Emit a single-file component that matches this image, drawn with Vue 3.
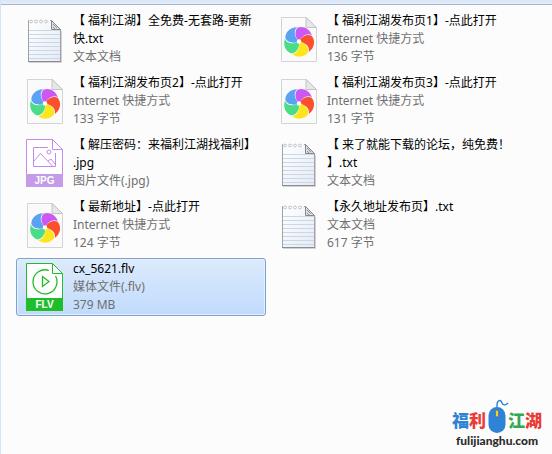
<script setup>
import { ref } from 'vue'

const files = [
  { kind: 'text', title: ['【 福利江湖】全免费-无套路-更新', '快.txt'], details: ['文本文档'] },
  { kind: 'link', title: ['【 福利江湖发布页1】-点此打开'], details: ['Internet 快捷方式', '136 字节'] },
  { kind: 'link', title: ['【 福利江湖发布页2】-点此打开'], details: ['Internet 快捷方式', '133 字节'] },
  { kind: 'link', title: ['【 福利江湖发布页3】-点此打开'], details: ['Internet 快捷方式', '131 字节'] },
  { kind: 'jpg', title: ['【 解压密码：来福利江湖找福利】', '.jpg'], details: ['图片文件(.jpg)'] },
  { kind: 'text', title: ['【 来了就能下载的论坛，纯免费！', '】.txt'], details: ['文本文档'] },
  { kind: 'link', title: ['【 最新地址】-点此打开'], details: ['Internet 快捷方式', '124 字节'] },
  { kind: 'text', title: ['【永久地址发布页】.txt'], details: ['文本文档', '617 字节'] },
  { kind: 'flv', title: ['cx_5621.flv'], details: ['媒体文件(.flv)', '379 MB'] },
]
const selected = ref(8)
const petals = ['#cb58f2', '#fb4f2d', '#fde51d', '#48dd86', '#5ba2f5']
const rules = [15, 19, 23, 27, 31, 35, 39, 43]
const rings = [5, 10, 15, 20]
</script>

<template>
  <main class="window">
    <div class="toolbar-edge"></div>
    <ul class="files">
      <li v-for="(file, i) in files" :key="i">
        <button type="button" class="file" :class="{ selected: selected === i }" :aria-pressed="selected === i" @click="selected = i">
          <svg v-if="file.kind === 'text'" class="icon" viewBox="0 0 37 48" aria-hidden="true">
            <defs>
              <linearGradient :id="'paper' + i" x1="0" y1="0" x2="1" y2="1">
                <stop offset="0" stop-color="#ffffff" />
                <stop offset="1" stop-color="#e6e9f6" />
              </linearGradient>
            </defs>
            <path d="M3 47.5H35.5V16" fill="none" stroke="#d2d2d4" />
            <path d="M2.5 5.5H25.5L34.5 14.5V46.5H2.5Z" :fill="`url(#paper${i})`" stroke="#a0a2a6" />
            <path d="M2 46.5H35" stroke="#8b8d91" />
            <path v-for="y in rules" :key="y" :d="`M3 ${y}.5H34`" stroke="#c6dae5" />
            <path d="M25.5 5.5V14.5H34.5Z" fill="#dcdde0" stroke="#85878b" />
            <path d="M27 9L31 13M27 12L29 14" stroke="#8e9094" />
            <path d="M3 5.5H24" stroke="#f4f4f6" />
            <circle v-for="x in rings" :key="x" :cx="x" cy="6.5" r="1.4" fill="#fff" stroke="#b4b5b8" stroke-width="0.8" />
          </svg>

          <svg v-else-if="file.kind === 'link'" class="icon" viewBox="0 0 37 48" aria-hidden="true">
            <path d="M1.5 2.5H26.5L36.5 12.5V46.5H1.5Z" fill="#fafafa" stroke="#d3d4d6" />
            <path d="M26 2.5V12.5H36.5Z" fill="#e6e7e9" stroke="#c3c4c7" />
            <g transform="translate(19 26.5)">
              <path v-for="(color, n) in petals" :key="color" d="M0 0C-4 -4 -5 -11 -1 -14C4 -16 11 -13 13 -6C9 -9 3 -6 0 0Z" :fill="color" :transform="`rotate(${n * 72})`" />
              <circle r="2.2" fill="#fff" />
            </g>
          </svg>

          <svg v-else-if="file.kind === 'jpg'" class="icon" viewBox="0 0 37 48" aria-hidden="true">
            <path d="M0.5 0.5H26.5L36.5 10.5V47.5H0.5Z" fill="#fff" stroke="#c18bec" />
            <path d="M26.5 0.5V10.5H36.5" fill="none" stroke="#c18bec" />
            <path d="M22 8.5H7.5V27.5H29.5V14" fill="none" stroke="#c18bec" />
            <path d="M8 22L14.5 14.5L26.5 27M22 22L25 20L29 25" fill="none" stroke="#c18bec" />
            <circle cx="23" cy="13" r="2" fill="none" stroke="#c18bec" />
            <path d="M0 35H37V48H0Z" fill="#c49be9" />
            <text x="18.5" y="45" class="badge">JPG</text>
          </svg>

          <svg v-else class="icon" viewBox="0 0 37 48" aria-hidden="true">
            <path d="M0.5 0.5H26.5L36.5 10.5V47.5H0.5Z" fill="#fff" stroke="#20bd2b" />
            <path d="M26.5 0.5V10.5H36.5" fill="none" stroke="#20bd2b" />
            <path d="M23 7.5A12 12 0 1 0 29.5 13" fill="none" stroke="#20bd2b" stroke-width="1.3" />
            <path d="M16.5 13.5V23.5L23 18.5Z" fill="none" stroke="#20bd2b" stroke-width="1.3" />
            <path d="M0 35H37V48H0Z" fill="#20bd2b" />
            <text x="18.5" y="45" class="badge">FLV</text>
          </svg>

          <span class="info">
            <span v-for="line in file.title" :key="line" class="name">{{ line }}</span>
            <span v-for="line in file.details" :key="line" class="detail">{{ line }}</span>
          </span>
        </button>
      </li>
    </ul>

    <footer class="brand">
      <div class="brand-row">
        <span class="blue">福</span><span class="red">利</span>
        <svg class="mouse" viewBox="0 0 18 34" aria-hidden="true">
          <path d="M9 9V6C9 1 13 0 14 4C15 7 18 6 20 4" fill="none" stroke="#2f83d6" stroke-width="1.4" />
          <rect x="0.5" y="8" width="17" height="26" rx="8.5" fill="#2f83d6" />
          <rect x="7.5" y="11" width="3" height="7" rx="1.5" fill="#fbd02c" stroke="#2167ad" stroke-width="0.6" />
        </svg>
        <span class="green">江</span><span class="red">湖</span>
      </div>
      <div class="domain">fulijianghu.com</div>
    </footer>
  </main>
</template>

<style>
body {
  margin: 0;
  background: #fcfcfc;
}
</style>

<style scoped>
.window {
  box-sizing: border-box;
  min-height: 100vh;
  display: flex;
  flex-direction: column;
  border-left: 1px solid #d3e2f5;
  font-family: "Noto Sans", "Noto Sans CJK SC", sans-serif;
}
.toolbar-edge {
  box-sizing: border-box;
  height: 5px;
  background: linear-gradient(#d9e6f6, #e4edf8);
  border-bottom: 1px solid #a3b5d0;
}
.files {
  list-style: none;
  margin: 0;
  padding: 5px 15px;
  display: grid;
  grid-template-columns: repeat(auto-fill, 250px);
  gap: 4px;
}
.file {
  box-sizing: border-box;
  width: 100%;
  height: 58px;
  display: flex;
  align-items: center;
  gap: 10px;
  padding: 1px 9px;
  border: 1px solid transparent;
  border-radius: 3px;
  background: none;
  font: inherit;
  text-align: left;
}
.selected {
  border-color: #7da2ce;
  background: linear-gradient(#dceafc, #c1dbfc);
  box-shadow: inset 0 0 0 1px #e5f0fd;
}
.icon {
  flex: none;
  width: 37px;
  height: 48px;
}
.badge {
  font: bold 10px "Liberation Sans", sans-serif;
  fill: #fff;
  text-anchor: middle;
}
.info {
  display: flex;
  flex-direction: column;
  font-size: 12px;
  line-height: 18px;
  white-space: nowrap;
  text-spacing-trim: space-all;
}
.name {
  color: #000;
}
.detail {
  color: #707070;
}
.brand {
  align-self: flex-end;
  margin-top: auto;
  padding: 0 10px 6px;
  text-align: center;
}
.brand-row {
  display: flex;
  align-items: flex-end;
  font: 900 17px/26px "Noto Sans CJK SC", sans-serif;
}
.mouse {
  width: 18px;
  height: 34px;
  margin: 0 2px;
  overflow: visible;
}
.blue {
  color: #2f83d6;
}
.red {
  color: #ea3b36;
}
.green {
  color: #2fa84f;
}
.domain {
  font: 900 12px/15px Lato, sans-serif;
  color: #2b2b2b;
}
</style>
